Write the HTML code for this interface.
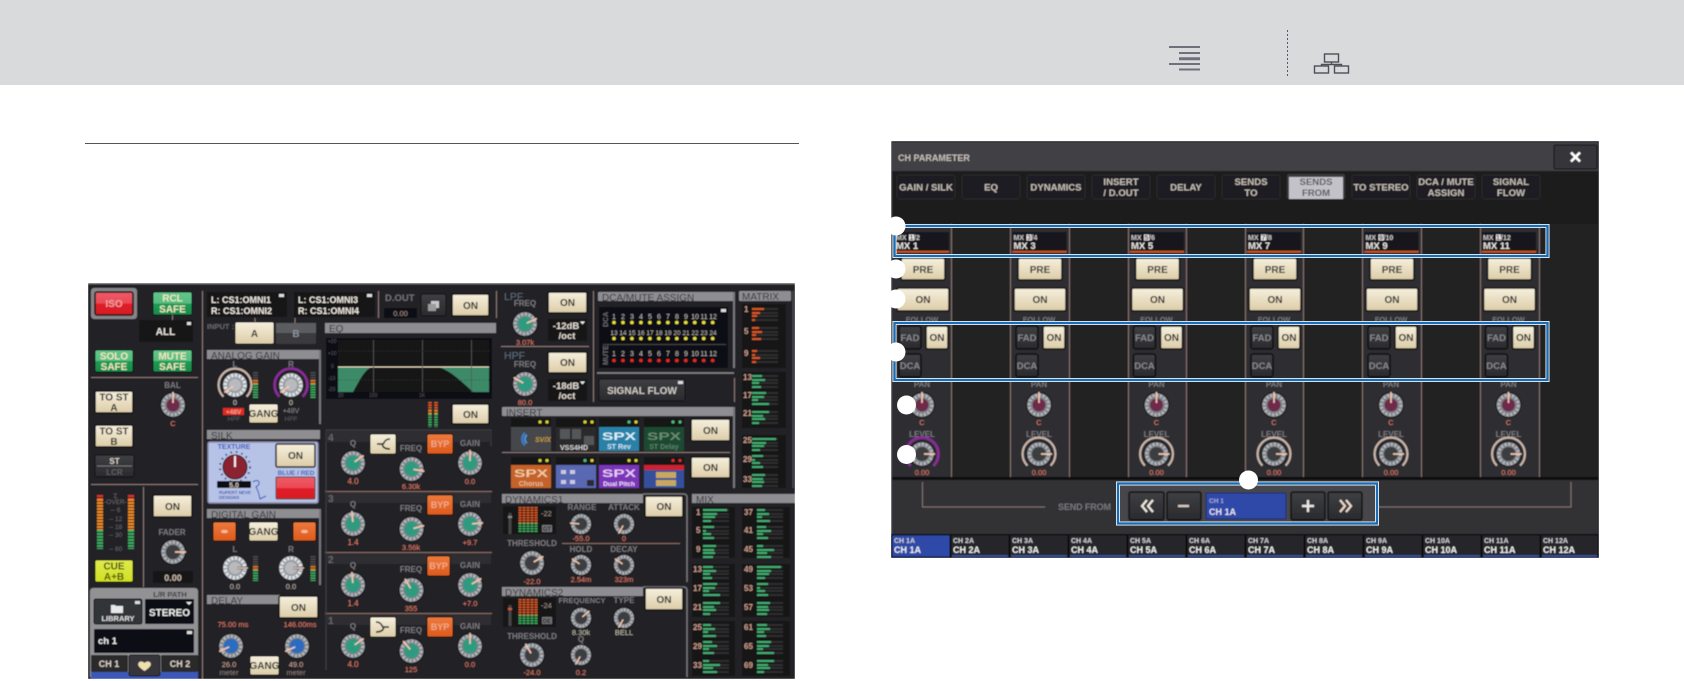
<!DOCTYPE html>
<html><head><meta charset="utf-8"><title>CH PARAMETER</title>
<style>
html,body{margin:0;padding:0;background:#fff;width:1684px;height:681px;overflow:hidden}
svg{display:block;font-family:"Liberation Sans",sans-serif}
.v{fill:#e07a68;font-size:7.5px;text-anchor:middle}
.l{fill:#77777c;font-size:8px;font-weight:bold;text-anchor:middle}
.h{fill:#333338;font-size:10px}
.b{fill:#2b2b2b;font-size:10px;font-weight:bold;text-anchor:middle}
.w{fill:#e8e4dc;font-size:10px;font-weight:bold;text-anchor:middle}
.g{fill:#f0e6c0;font-size:10px;font-weight:bold;text-anchor:middle}
.o{fill:#c2bab2;font-size:9.6px;font-weight:bold;text-anchor:middle}
.n{fill:#d8d0c8;font-size:8px;font-weight:bold;text-anchor:middle}
.s{fill:#efe8e0;font-size:9px;font-weight:bold}
.t{fill:#c8c8c8;font-size:7px;font-weight:bold}
</style></head><body>
<svg width="1684" height="681" viewBox="0 0 1684 681" xmlns="http://www.w3.org/2000/svg">
<defs>
<linearGradient id="cr" x1="0" y1="0" x2="0" y2="1"><stop offset="0" stop-color="#f6efdd"/><stop offset="1" stop-color="#dccda8"/></linearGradient>
<linearGradient id="gr" x1="0" y1="0" x2="0" y2="1"><stop offset="0" stop-color="#62c68a"/><stop offset=".5" stop-color="#56bd80"/><stop offset=".51" stop-color="#1f9c55"/><stop offset="1" stop-color="#178a4a"/></linearGradient>
<linearGradient id="re" x1="0" y1="0" x2="0" y2="1"><stop offset="0" stop-color="#ee5a68"/><stop offset=".5" stop-color="#ea4a55"/><stop offset=".51" stop-color="#e2202a"/><stop offset="1" stop-color="#d61a22"/></linearGradient>
<linearGradient id="ye" x1="0" y1="0" x2="0" y2="1"><stop offset="0" stop-color="#e0ea50"/><stop offset="1" stop-color="#d0e020"/></linearGradient>
<linearGradient id="or" x1="0" y1="0" x2="0" y2="1"><stop offset="0" stop-color="#ee7a3c"/><stop offset="1" stop-color="#dc5a1c"/></linearGradient>
<linearGradient id="dk" x1="0" y1="0" x2="0" y2="1"><stop offset="0" stop-color="#3e3f43"/><stop offset="1" stop-color="#2a2b2e"/></linearGradient>
<filter id="bl" x="0" y="0" width="100%" height="100%"><feGaussianBlur stdDeviation="0.45"/></filter>
<g id="r"><circle r="13" fill="#0c0c0c"/><circle r="12" fill="#7e8186"/><circle r="9.8" fill="none" stroke="#b2b5ba" stroke-width="3" stroke-dasharray="2.2 1.6"/></g>
<g id="kT"><use href="#r"/><circle r="7.2" fill="#2f9b80"/></g>
<g id="kM"><use href="#r"/><circle r="6.5" fill="#6e2c4c"/></g>
<g id="kD"><use href="#r"/><circle r="7" fill="#3b3c40"/></g>
<g id="kB"><use href="#r"/><circle r="7.2" fill="#2c6cc0"/></g>
<g id="kS"><circle r="13" fill="#222"/><circle r="12" fill="#9a9da2"/><circle r="9.8" fill="none" stroke="#dfe2e6" stroke-width="3.4" stroke-dasharray="2.4 1.4"/><circle r="6" fill="#b8babe"/></g>
<path id="p" d="M0-2V-13" stroke="#f4c4aa" stroke-width="1.7" fill="none"/>
<path id="arc" d="M-11.6 11.6A16.4 16.4 0 1 1 11.6 11.6" fill="none" stroke="#c9b4a8" stroke-width="2.2"/>
<g id="strip">
<rect x="-21" y="258" width="44" height="22" rx="2" fill="url(#cr)" stroke="#0e0e0e" stroke-width="1.5"/><text class="b" x="1" y="273">PRE</text>
<rect x="-25" y="288" width="52" height="23" rx="2" fill="url(#cr)" stroke="#0e0e0e" stroke-width="1.5"/><text class="b" x="1" y="303">ON</text>
<text class="l" x="0" y="322" style="font-size:7.5px">FOLLOW</text>
<rect x="-23" y="326" width="22" height="23" rx="2.5" fill="url(#dk)" stroke="#0b0b0b" stroke-width="1.5"/><text x="-12" y="341" fill="#85858a" font-size="9.5" font-weight="bold" text-anchor="middle">FAD</text>
<rect x="4" y="326" width="22" height="23" rx="2" fill="url(#cr)" stroke="#0e0e0e" stroke-width="1.5"/><text class="b" x="15" y="341">ON</text>
<rect x="-23" y="354" width="22" height="23" rx="2.5" fill="url(#dk)" stroke="#0b0b0b" stroke-width="1.5"/><text x="-12" y="369" fill="#85858a" font-size="9.5" font-weight="bold" text-anchor="middle">DCA</text>
<text class="l" x="0" y="387">PAN</text>
<g transform="translate(0 405)"><use href="#kM"/><use href="#p"/></g>
<text class="v" x="0" y="425">C</text>
<text class="l" x="0" y="437">LEVEL</text>
<g transform="translate(0 454)"><use href="#arc"/><use href="#kD"/><path d="M2 0H13" stroke="#f4c4aa" stroke-width="1.7"/></g>
<text class="v" x="0" y="475">0.00</text>
</g>
<g id="bars1"><path d="M0 3h26M0 7h26M0 10h26M0 14h26M0 20h26M0 24h26M0 27h26M0 31h26M0 39h26M0 43h26M0 46h26M0 50h26" stroke="#2e2e30" stroke-width="2"/><path d="M0 3h24M0 7h14M0 10h12M0 14h8M0 20h11M0 24h3M0 27h8M0 31h11M0 39h13M0 43h11M0 46h12M0 50h10" stroke="#42ac70" stroke-width="2"/></g>
<g id="bars2"><path d="M0 3h26M0 7h26M0 10h26M0 14h26M0 20h26M0 24h26M0 27h26M0 31h26M0 39h26M0 43h26M0 46h26M0 50h26" stroke="#2e2e30" stroke-width="2"/><path d="M0 3h10M0 7h13M0 10h7M0 14h9M0 20h14M0 24h12M0 27h6M0 31h17M0 39h17M0 43h11M0 46h13M0 50h7" stroke="#42ac70" stroke-width="2"/></g>
<g id="bars3"><path d="M0 3h26M0 7h26M0 10h26M0 14h26M0 20h26M0 24h26M0 27h26M0 31h26M0 39h26M0 43h26M0 46h26M0 50h26" stroke="#2e2e30" stroke-width="2"/><path d="M0 3h8M0 7h12M0 10h5M0 14h13M0 20h9M0 24h14M0 27h6M0 31h11M0 39h6M0 43h17M0 46h10M0 50h14" stroke="#42ac70" stroke-width="2"/></g>
</defs>

<!-- page header -->
<rect width="1684" height="85" fill="#d9dadc"/>
<path d="M1169 47h31M1179 53h21M1169 64h31M1179 69.500h21" stroke="#70707c" stroke-width="2" fill="none"/>
<path d="M1179 58.700h21" stroke="#70707c" stroke-width="3"/>
<path d="M1287.500 30V76" stroke="#5a5a62" stroke-width="1" stroke-dasharray="2 2"/>
<g fill="none" stroke="#4e4e5a" stroke-width="1.400"><rect x="1324.500" y="54" width="14" height="8"/><rect x="1314.500" y="66" width="14" height="7"/><rect x="1334.500" y="66" width="14" height="7"/><path d="M1331.500 62v2.500M1321.500 66v-1.500H1341.500V66"/></g>
<rect x="85" y="143" width="714" height="1" fill="#55555a"/>

<!-- LEFT SCREENSHOT -->
<g filter="url(#bl)">
<rect x="88" y="283" width="707" height="396" fill="#232325"/>
<rect x="88" y="283" width="707" height="1.500" fill="#666"/>
<g fill="none" stroke="#8a7772" stroke-width="1">
<path d="M91 377.500H198M91 484.500H198M202.500 291V679M143.500 487V587M378.500 291V318M496.500 291V318M593.500 291V402M501 346.500H589M734.500 378V402M502 452.500H730"/>
</g>
<rect x="91" y="288" width="46" height="31" rx="3" fill="#85858a"/>
<rect x="95" y="292" width="38" height="23" rx="2" fill="url(#re)" stroke="#111" stroke-width="1.500"/><text class="g" x="114" y="307" style="fill:#e8a0a0">ISO</text>
<rect x="153" y="292" width="39" height="23" rx="1.500" fill="url(#gr)" stroke="#111"/><text class="g" x="172.500" y="301.500">RCL</text><text class="g" x="172.500" y="312.500">SAFE</text>
<path d="M172.500 315v5" stroke="#8a7772"/>
<rect x="139" y="320" width="54" height="22" fill="#141416"/><text class="w" x="165.500" y="335" font-size="10">ALL</text><rect x="187" y="322" width="4" height="3" fill="#ddd"/>
<rect x="95" y="350" width="38" height="22" rx="1.500" fill="url(#gr)" stroke="#111"/><text class="g" x="114" y="359.500">SOLO</text><text class="g" x="114" y="370">SAFE</text>
<rect x="153" y="350" width="39" height="22" rx="1.500" fill="url(#gr)" stroke="#111"/><text class="g" x="172.500" y="359.500">MUTE</text><text class="g" x="172.500" y="370">SAFE</text>
<rect x="95" y="391" width="38" height="22" rx="1.500" fill="url(#cr)" stroke="#111" stroke-width="1.500"/><text class="b" x="114" y="400.500">TO ST</text><text class="b" x="114" y="411">A</text>
<rect x="95" y="425" width="38" height="22" rx="1.500" fill="url(#cr)" stroke="#111" stroke-width="1.500"/><text class="b" x="114" y="434.500">TO ST</text><text class="b" x="114" y="445">B</text>
<rect x="95" y="455" width="39" height="22" rx="2" fill="url(#dk)" stroke="#111"/><path d="M97 466h35" stroke="#777"/><text class="n" x="114.500" y="464">ST</text><text x="114.500" y="475" fill="#5e5e62" font-size="8" font-weight="bold" text-anchor="middle">LCR</text>
<text class="l" x="172.500" y="388">BAL</text>
<g transform="translate(173 405)"><use href="#kM"/><use href="#p"/></g><text class="v" x="173" y="426">C</text>
<g fill="none" stroke-width="6" stroke-dasharray="2 1"><path d="M100 495v4M131 495v4" stroke="#d8322a"/><path d="M100 499v31M131 499v31" stroke="#ee8a22"/><path d="M100 530v19M131 530v19" stroke="#3ea85e"/></g>
<g fill="#66666a" font-size="6.500" text-anchor="middle"><text x="115.500" y="498">Σ</text><text x="115.500" y="504">-OVER-</text><text x="115.500" y="512">-- 6</text><text x="115.500" y="521">-- 12</text><text x="115.500" y="529">-- 18</text><text x="115.500" y="537">-- 30</text><text x="115.500" y="551">-- 60</text></g>
<rect x="153" y="495" width="39" height="22" rx="1.500" fill="url(#cr)" stroke="#111" stroke-width="1.500"/><text class="b" x="172.500" y="510">ON</text>
<text class="l" x="172" y="535">FADER</text>
<g transform="translate(173 552)"><use href="#kD"/><path d="M2 0H13" stroke="#f4c4aa" stroke-width="1.700"/></g>
<rect x="153" y="571" width="40" height="12" rx="1.500" fill="#141416"/><text x="173" y="581" fill="#cbb8a8" font-size="9" font-weight="bold" text-anchor="middle">0.00</text>
<rect x="95" y="560" width="38" height="22" rx="1.500" fill="url(#ye)" stroke="#111"/><text class="b" x="114" y="569.500" style="fill:#4a5018">CUE</text><text class="b" x="114" y="580" style="fill:#4a5018">A+B</text>
<!-- bottom left panel -->
<rect x="90" y="588" width="108" height="91" rx="3" fill="#929294"/>
<text x="170" y="597" fill="#3a3a3c" font-size="7.500" font-weight="bold" text-anchor="middle">L/R PATH</text>
<rect x="94" y="599" width="48" height="25" rx="2" fill="#333437" stroke="#111"/><path d="M111 605h4l1 1h7v7h-12z" fill="#e8e8e8"/><text x="118" y="621" fill="#dcdcdc" font-size="7.500" font-weight="bold" text-anchor="middle">LIBRARY</text><rect x="135" y="601" width="5" height="3" fill="#ddd"/>
<rect x="145" y="599" width="49" height="25" rx="1" fill="#111114"/><text x="169.500" y="616" fill="#eee" font-size="10" font-weight="bold" text-anchor="middle">STEREO</text><path d="M186 602h6l-3 3z" fill="#eee"/>
<rect x="94" y="629" width="100" height="24" rx="1" fill="#111114"/><text x="98" y="644" fill="#eee" font-size="9.500" font-weight="bold">ch 1</text><rect x="187" y="631" width="5" height="3" fill="#ddd"/>
<rect x="91" y="655" width="37" height="17" rx="1" fill="#2a2a2c"/><text class="n" x="109" y="667" style="font-size:9px">CH 1</text>
<rect x="161" y="655" width="37" height="17" rx="1" fill="#2a2a2c"/><text class="n" x="180" y="667" style="font-size:9px">CH 2</text>
<rect x="91" y="672" width="107" height="7" fill="#3c58b8"/>
<rect x="129" y="655" width="31" height="21" rx="2" fill="#35363a" stroke="#111"/><path d="M144.500 671c-6-4-7-6-6-8 1-2 4-2 6 0 2-2 5-2 6 0 1 2 0 4-6 8z" fill="#f0e0b0"/>
<!-- inputs -->
<rect x="207" y="292" width="80" height="25" fill="#141416"/><text class="s" x="211" y="303">L: CS1:OMNI1</text><text class="s" x="211" y="314">R: CS1:OMNI2</text><rect x="279" y="294" width="5" height="3" fill="#ddd"/>
<rect x="294" y="292" width="81" height="25" fill="#141416"/><text class="s" x="298" y="303">L: CS1:OMNI3</text><text class="s" x="298" y="314">R: CS1:OMNI4</text><rect x="367" y="294" width="5" height="3" fill="#ddd"/>
<text x="207" y="329" fill="#66666a" font-size="7.500" font-weight="bold">INPUT :</text>
<rect x="235" y="322" width="39" height="22" rx="1.500" fill="url(#cr)" stroke="#111"/><text class="b" x="254.500" y="337">A</text>
<rect x="276" y="323" width="40" height="21" rx="1.500" fill="#3a3b3e"/><rect x="276" y="323" width="40" height="10" fill="#5c5d60"/><text x="296" y="337" fill="#8a9098" font-size="10" font-weight="bold" text-anchor="middle">B</text>
<path d="M255 318v4M295 318v5" stroke="#8a7772"/>
<text x="385" y="301" fill="#707075" font-size="9.500" font-weight="bold">D.OUT</text>
<rect x="384" y="308" width="33" height="10" rx="1" fill="#111114"/><text class="v" x="400.500" y="316" style="fill:#a08a80">0.00</text>
<rect x="421" y="294" width="25" height="22" rx="2" fill="url(#dk)" stroke="#111"/><rect x="431" y="301" width="8" height="7" fill="#c8c8c8"/><rect x="428" y="304" width="8" height="7" fill="#9a9a9a"/>
<rect x="452" y="294" width="37" height="22" rx="1.500" fill="url(#cr)" stroke="#111" stroke-width="1.500"/><text class="b" x="470.500" y="309">ON</text>
<!-- analog gain -->
<rect x="207" y="350" width="113" height="9" fill="#8e8e92"/><text class="h" x="211" y="359">ANALOG GAIN</text>
<path d="M320 350v74" stroke="#77777c" stroke-width="2"/>
<text class="l" x="235" y="367">L</text><text class="l" x="291" y="367">R</text>
<g transform="translate(235 385)"><use href="#arc"/><use href="#kS"/><use href="#p" transform="rotate(-125)"/></g>
<g transform="translate(291 385)"><path d="M-11.600 11.600A16.400 16.400 0 1 1 11.600 11.600" fill="none" stroke="#8a2a9a" stroke-width="2.600"/><use href="#kS"/><use href="#p" transform="rotate(-125)"/></g>
<g fill="none" stroke-width="5" stroke-dasharray="1.500 1"><path d="M255.500 372v8M313 372v8" stroke="#4a4a4a"/><path d="M255.500 380v4M313 380v4" stroke="#d87a28"/><path d="M255.500 384v14M313 384v14" stroke="#3ea85e"/></g>
<text class="v" x="235" y="405" style="fill:#c8c0b8">0</text><text class="v" x="291" y="405" style="fill:#c8c0b8">0</text>
<rect x="223" y="408" width="21" height="7" fill="#e22a20"/><text x="233.500" y="414" fill="#eea090" font-size="6.500" font-weight="bold" text-anchor="middle">+48V</text>
<text x="291" y="413" fill="#85858a" font-size="7" text-anchor="middle">+48V</text>
<text x="234" y="421" fill="#56565a" font-size="6.500" text-anchor="middle">HPF</text><text x="291" y="421" fill="#56565a" font-size="6.500" text-anchor="middle">HPF</text>
<rect x="249" y="404" width="29" height="19" rx="1.500" fill="url(#cr)" stroke="#111"/><text class="b" x="263.500" y="417">GANG</text>
<!-- silk -->
<rect x="207" y="430" width="113" height="9" fill="#8e8e92"/><text class="h" x="211" y="439">SILK</text>
<rect x="208" y="442" width="110" height="61" rx="2" fill="#b6c2e6" stroke="#8a88a8" stroke-width="1.500"/>
<text x="234" y="449" fill="#3c5cc0" font-size="7" font-weight="bold" text-anchor="middle">TEXTURE</text>
<circle cx="235" cy="467" r="15" fill="none" stroke="#3a4a88" stroke-width="2" stroke-dasharray="1.500 4"/>
<circle cx="235" cy="467" r="12" fill="#8a2030" stroke="#3a1a24"/><path d="M235 467v-11" stroke="#eee" stroke-width="2"/>
<rect x="217" y="481" width="34" height="7" rx="1" fill="#101012"/><text x="234" y="487.500" fill="#d8c8b8" font-size="7" font-weight="bold" text-anchor="middle">5.0</text>
<text x="219" y="494" fill="#4a5cb0" font-size="4.500" font-weight="bold">RUPERT NEVE</text><text x="219" y="499" fill="#4a5cb0" font-size="4.500" font-weight="bold">DESIGNS</text>
<path d="M253 482c2-2 5-2 6 0 1 3-2 4-3 5 2 3 3 7 4 12l6-3" fill="none" stroke="#3a55b8" stroke-width="1"/>
<rect x="276" y="444" width="39" height="23" rx="1.500" fill="url(#cr)" stroke="#222" stroke-width="1.500"/><text class="b" x="295.500" y="459">ON</text>
<text x="296" y="475" fill="#3c5cc0" font-size="6.500" font-weight="bold" text-anchor="middle">BLUE / RED</text>
<rect x="276" y="477" width="39" height="22" rx="1.500" fill="url(#re)" stroke="#444"/>
<!-- digital gain -->
<rect x="207" y="509" width="113" height="9" fill="#8e8e92"/><text class="h" x="211" y="518">DIGITAL GAIN</text>
<path d="M320 509v76" stroke="#77777c" stroke-width="2"/>
<rect x="213" y="522" width="23" height="19" rx="1.500" fill="url(#or)" stroke="#111"/><ellipse cx="224.500" cy="531.500" rx="3.500" ry="1.800" fill="#f8b89a"/>
<rect x="293" y="522" width="23" height="19" rx="1.500" fill="url(#or)" stroke="#111"/><ellipse cx="304.500" cy="531.500" rx="3.500" ry="1.800" fill="#f8b89a"/>
<rect x="249" y="522" width="29" height="19" rx="1.500" fill="url(#cr)" stroke="#111"/><text class="b" x="263.500" y="535">GANG</text>
<text class="l" x="235" y="552">L</text><text class="l" x="291" y="552">R</text>
<g transform="translate(235 568)"><use href="#kS"/><path d="M2 0H13" stroke="#222" stroke-width="2.200"/><path d="M2 0H13" stroke="#f4d4c4" stroke-width="1"/></g>
<g transform="translate(291 568)"><use href="#kS"/><path d="M2 0H13" stroke="#222" stroke-width="2.200"/><path d="M2 0H13" stroke="#f4d4c4" stroke-width="1"/></g>
<g fill="none" stroke-width="5" stroke-dasharray="1.500 1"><path d="M255.500 556v10M313 556v10" stroke="#4a4a4a"/><path d="M255.500 566v4M313 566v4" stroke="#d87a28"/><path d="M255.500 570v11M313 570v11" stroke="#3ea85e"/></g>
<text class="v" x="235" y="589" style="fill:#bbb0a8">0.0</text><text class="v" x="291" y="589" style="fill:#bbb0a8">0.0</text>
<!-- delay -->
<rect x="207" y="595" width="73" height="9" fill="#8e8e92"/><text class="h" x="211" y="604">DELAY</text>
<rect x="279" y="596" width="39" height="22" rx="1.500" fill="url(#cr)" stroke="#111" stroke-width="1.500"/><text class="b" x="298.500" y="611">ON</text>
<text class="v" x="233" y="627">75.00 ms</text><text class="v" x="300" y="627">146.00ms</text>
<g transform="translate(231 646)"><use href="#kB"/><use href="#p" transform="rotate(-115)"/></g>
<g transform="translate(297 646)"><use href="#kB"/><use href="#p" transform="rotate(-115)"/></g>
<text class="v" x="229" y="667" style="fill:#c8a090">26.0</text><text class="v" x="229" y="675" style="fill:#8a7a74">meter</text>
<text class="v" x="296" y="667" style="fill:#c8a090">49.0</text><text class="v" x="296" y="675" style="fill:#8a7a74">meter</text>
<rect x="250" y="656" width="29" height="19" rx="1.500" fill="url(#cr)" stroke="#111"/><text class="b" x="264.500" y="669">GANG</text>
<!-- EQ -->
<rect x="325" y="323" width="171" height="10" fill="#8e8e92"/><text class="h" x="329" y="332">EQ</text>
<rect x="326" y="338" width="166" height="61" fill="#101012"/>
<rect x="338" y="340" width="151" height="52" fill="#171719"/>
<path d="M338 367H372C364 370 360 380 353 392H338ZM438 367C450 370 462 382 473 392H489V367Z" fill="#3e8a68"/>
<path d="M338 367H489" stroke="#eadcbc" stroke-width="1"/>
<path d="M373.500 340V392M422.500 340V392M471.500 340V392" stroke="#55555a" stroke-width=".8"/>
<path d="M338 351H489M338 380H489" stroke="#3a3a3e" stroke-width=".7" stroke-dasharray="1 2"/>
<g fill="#55555a" font-size="5"><text x="328" y="343">+20</text><text x="328" y="355">+10</text><text x="331" y="368">0</text><text x="328" y="380">-10</text><text x="328" y="391">-20</text><text x="338" y="397">20</text><text x="369" y="397">100</text><text x="419" y="397">1K</text></g>
<g fill="none" stroke-width="3.500" stroke-dasharray="1.500 1"><path d="M430 402v8M436 402v8" stroke="#d85a28"/><path d="M430 410v4M436 410v4" stroke="#e08a2c"/><path d="M430 414v13M436 414v13" stroke="#3ea85e"/></g>
<rect x="452" y="404" width="37" height="20" rx="1.500" fill="url(#cr)" stroke="#111" stroke-width="1.500"/><text class="b" x="470.500" y="418">ON</text>
<!-- bands -->
<path d="M325 491.500H492M325 552.500H492M325 613.500H492" stroke="#8a6a62"/>
<path d="M326 430h165v16M326 430v240" fill="none" stroke="#3c3c40"/>
<g fill="#2d2d30"><rect x="326" y="431" width="165" height="11"/><rect x="326" y="492" width="165" height="11"/><rect x="326" y="553" width="165" height="11"/><rect x="326" y="614" width="165" height="11"/></g>
<g fill="#66666a" font-size="10" font-weight="bold"><text x="328" y="441">4</text><text x="328" y="502">3</text><text x="328" y="563">2</text><text x="328" y="624">1</text></g>
<text class="l" x="353" y="446">Q</text><g transform="translate(353 463)"><use href="#kT"/><use href="#p" transform="rotate(55)"/></g><text class="v" x="353" y="484" style="font-size:8px">4.0</text>
<text class="l" x="411" y="451">FREQ</text><g transform="translate(411.500 469)"><use href="#kT"/><use href="#p" transform="rotate(100)"/></g><text class="v" x="411" y="489">6.30k</text>
<text class="l" x="470" y="446">GAIN</text><g transform="translate(470 463)"><use href="#kT"/><use href="#p"/></g><text class="v" x="470" y="484">0.0</text>
<text class="l" x="353" y="507">Q</text><g transform="translate(353 524)"><use href="#kT"/><use href="#p" transform="rotate(-5)"/></g><text class="v" x="353" y="545" style="font-size:8px">1.4</text>
<text class="l" x="411" y="511">FREQ</text><g transform="translate(411.500 529)"><use href="#kT"/><use href="#p" transform="rotate(75)"/></g><text class="v" x="411" y="550">3.56k</text>
<text class="l" x="470" y="507">GAIN</text><g transform="translate(470 524)"><use href="#kT"/><use href="#p" transform="rotate(85)"/></g><text class="v" x="470" y="545">+9.7</text>
<text class="l" x="353" y="568">Q</text><g transform="translate(353 585)"><use href="#kT"/><use href="#p" transform="rotate(-5)"/></g><text class="v" x="353" y="606" style="font-size:8px">1.4</text>
<text class="l" x="411" y="572">FREQ</text><g transform="translate(411.500 590)"><use href="#kT"/><use href="#p" transform="rotate(-30)"/></g><text class="v" x="411" y="611">355</text>
<text class="l" x="470" y="568">GAIN</text><g transform="translate(470 585)"><use href="#kT"/><use href="#p" transform="rotate(60)"/></g><text class="v" x="470" y="606">+7.0</text>
<text class="l" x="353" y="629">Q</text><g transform="translate(353 646)"><use href="#kT"/><use href="#p" transform="rotate(55)"/></g><text class="v" x="353" y="667" style="font-size:8px">4.0</text>
<text class="l" x="411" y="633">FREQ</text><g transform="translate(411.500 651)"><use href="#kT"/><use href="#p" transform="rotate(-40)"/></g><text class="v" x="411" y="672">125</text>
<text class="l" x="470" y="629">GAIN</text><g transform="translate(470 646)"><use href="#kT"/><use href="#p"/></g><text class="v" x="470" y="667">0.0</text>
<g fill="url(#or)" stroke="#111"><rect x="427" y="434" width="26" height="20" rx="1.500"/><rect x="427" y="495" width="26" height="20" rx="1.500"/><rect x="427" y="556" width="23" height="20" rx="1.500"/><rect x="427" y="617" width="26" height="20" rx="1.500"/></g>
<g fill="#f0a888" font-size="9" font-weight="bold" text-anchor="middle"><text x="440" y="447">BYP</text><text x="440" y="508">BYP</text><text x="438.500" y="569">BYP</text><text x="440" y="630">BYP</text></g>
<rect x="370" y="434" width="26" height="20" rx="1.500" fill="url(#cr)" stroke="#111"/><path d="M377 444h6M390 439c-6 0-6 5-7 5s-1 5 7 5" fill="none" stroke="#222" stroke-width="1.600"/>
<rect x="370" y="617" width="26" height="20" rx="1.500" fill="url(#cr)" stroke="#111"/><path d="M389 627h-6M376 622c6 0 6 5 7 5s1 5-7 5" fill="none" stroke="#222" stroke-width="1.600"/>
<!-- LPF / HPF -->
<text x="504" y="300" fill="#5c6a78" font-size="10.500">LPF</text><text class="l" x="525" y="306">FREQ</text>
<rect x="548" y="292" width="39" height="21" rx="1.500" fill="url(#cr)" stroke="#111" stroke-width="1.500"/><text class="b" x="567.500" y="306">ON</text>
<g transform="translate(525 324)"><use href="#kT"/><use href="#p" transform="rotate(65)"/></g><text class="v" x="525" y="345">3.07k</text>
<rect x="548" y="319" width="39" height="22" fill="#131315"/><text x="566" y="329" fill="#e0d8d0" font-size="9.500" font-weight="bold" text-anchor="middle">-12dB</text><path d="M580 321.500h5l-2.500 3z" fill="#eee"/><text x="567" y="339" fill="#e0d8d0" font-size="9.500" font-weight="bold" text-anchor="middle">/oct</text>
<text x="504" y="359" fill="#5c6a78" font-size="10.500">HPF</text><text class="l" x="525" y="367">FREQ</text>
<rect x="548" y="352" width="39" height="21" rx="1.500" fill="url(#cr)" stroke="#111" stroke-width="1.500"/><text class="b" x="567.500" y="366">ON</text>
<g transform="translate(525 384)"><use href="#kT"/><use href="#p" transform="rotate(-60)"/></g><text class="v" x="525" y="405">80.0</text>
<rect x="548" y="379" width="39" height="22" fill="#131315"/><text x="566" y="389" fill="#e0d8d0" font-size="9.500" font-weight="bold" text-anchor="middle">-18dB</text><path d="M580 381.500h5l-2.500 3z" fill="#eee"/><text x="567" y="399" fill="#e0d8d0" font-size="9.500" font-weight="bold" text-anchor="middle">/oct</text>
<!-- DCA -->
<rect x="598" y="292" width="136" height="9" rx="1" fill="#8e8e92"/><text class="h" x="602" y="301">DCA/MUTE ASSIGN</text>
<path d="M734 292v76" stroke="#77777c" stroke-width="2"/>
<rect x="599" y="307" width="129" height="61" fill="#101012"/><rect x="721" y="309" width="5" height="3" fill="#ddd"/>
<g fill="#b8b4b0" font-size="7" text-anchor="middle"><text y="319"><tspan x="614">1</tspan><tspan x="623">2</tspan><tspan x="632">3</tspan><tspan x="641">4</tspan><tspan x="650">5</tspan><tspan x="659">6</tspan><tspan x="668">7</tspan><tspan x="677">8</tspan><tspan x="686">9</tspan><tspan x="695">10</tspan><tspan x="704">11</tspan><tspan x="713">12</tspan></text>
<text y="335" font-size="6.500"><tspan x="614">13</tspan><tspan x="623">14</tspan><tspan x="632">15</tspan><tspan x="641">16</tspan><tspan x="650">17</tspan><tspan x="659">18</tspan><tspan x="668">19</tspan><tspan x="677">20</tspan><tspan x="686">21</tspan><tspan x="695">22</tspan><tspan x="704">23</tspan><tspan x="713">24</tspan></text>
<text y="356"><tspan x="614">1</tspan><tspan x="623">2</tspan><tspan x="632">3</tspan><tspan x="641">4</tspan><tspan x="650">5</tspan><tspan x="659">6</tspan><tspan x="668">7</tspan><tspan x="677">8</tspan><tspan x="686">9</tspan><tspan x="695">10</tspan><tspan x="704">11</tspan><tspan x="713">12</tspan></text></g>
<g fill="none" stroke-linecap="round" stroke-width="3.600" stroke-dasharray="0 8.970"><path d="M614 322.500H716M614 338.500H716" stroke="#e8e040"/><path d="M614 360.500H716" stroke="#e8281e"/></g>
<path d="M603 344.500H726" stroke="#444"/>
<text transform="translate(608 327) rotate(-90)" fill="#66666a" font-size="7" font-weight="bold">DCA</text><text transform="translate(608 365) rotate(-90)" fill="#66666a" font-size="7" font-weight="bold">MUTE</text>
<path d="M597 373H734" stroke="#8a8a8a" stroke-width="1.500"/>
<rect x="599" y="379" width="86" height="22" rx="2" fill="url(#dk)" stroke="#111"/><text x="642" y="394" fill="#ccc6c0" font-size="10" font-weight="bold" text-anchor="middle">SIGNAL FLOW</text><rect x="678" y="381" width="5" height="3" fill="#ddd"/>
<!-- INSERT -->
<rect x="502" y="407" width="232" height="9" rx="1" fill="#8e8e92"/><text class="h" x="506" y="416">INSERT</text>
<path d="M734 407v81" stroke="#77777c" stroke-width="2"/>
<g fill="#131315"><rect x="511" y="418" width="40" height="33"/><rect x="556" y="418" width="40" height="33"/><rect x="599" y="418" width="40" height="33"/><rect x="644" y="418" width="40" height="33"/><rect x="511" y="457" width="40" height="31"/><rect x="556" y="457" width="40" height="31"/><rect x="599" y="457" width="40" height="31"/><rect x="644" y="457" width="40" height="31"/></g>
<rect x="511" y="427" width="40" height="24" fill="#44474c"/><path d="M525 433a8 8 0 0 0 0 12" fill="none" stroke="#3a7ac8" stroke-width="2.500"/><path d="M527 435a5 5 0 0 0 0 8" fill="none" stroke="#50a0e0" stroke-width="1.500"/><text x="535" y="442" fill="#c89a3a" font-size="7" font-weight="bold" font-style="italic">SV/X</text>
<rect x="556" y="427" width="40" height="24" fill="#2a2a2c"/><rect x="560" y="429" width="10" height="10" fill="#55565a"/><rect x="572" y="429" width="9" height="10" fill="#55565a"/><rect x="584" y="436" width="10" height="9" fill="#55565a"/><text x="574" y="450" fill="#cfcfcf" font-size="7" font-weight="bold" text-anchor="middle">VSS4HD</text>
<rect x="599" y="427" width="40" height="24" fill="#2b81a8"/><text x="602" y="440" fill="#d8f0f8" font-size="11" font-weight="bold" textLength="34" lengthAdjust="spacingAndGlyphs">SPX</text><text x="619" y="449" fill="#c8e4f0" font-size="7" font-weight="bold" text-anchor="middle">ST Rev</text>
<rect x="644" y="427" width="40" height="24" fill="#1e4a30"/><text x="647" y="440" fill="#6a8a70" font-size="11" font-weight="bold" textLength="34" lengthAdjust="spacingAndGlyphs">SPX</text><text x="664" y="449" fill="#5a8068" font-size="7" font-weight="bold" text-anchor="middle">ST Delay</text>
<rect x="511" y="465" width="40" height="23" fill="#c4622c"/><text x="514" y="477" fill="#f0c8a0" font-size="11" font-weight="bold" textLength="34" lengthAdjust="spacingAndGlyphs">SPX</text><text x="531" y="486" fill="#e8b890" font-size="7" font-weight="bold" text-anchor="middle">Chorus</text>
<rect x="556" y="465" width="40" height="23" fill="#5a68b4"/><g fill="#c8c8e0"><rect x="561" y="470" width="5" height="4"/><rect x="570" y="470" width="5" height="4"/><rect x="561" y="480" width="5" height="4"/><rect x="570" y="480" width="5" height="4"/></g><rect x="587" y="480" width="7" height="6" fill="#2a2a30"/>
<rect x="599" y="465" width="40" height="23" fill="#7a36b8"/><text x="602" y="477" fill="#e8c8f4" font-size="11" font-weight="bold" textLength="34" lengthAdjust="spacingAndGlyphs">SPX</text><text x="619" y="486" fill="#f0d8f8" font-size="6.500" font-weight="bold" text-anchor="middle">Dual Pitch</text>
<rect x="644" y="465" width="40" height="23" fill="#36509a"/><rect x="644" y="465" width="40" height="5" fill="#cc2230"/><rect x="656" y="472" width="20" height="6" fill="#c8a860"/><rect x="656" y="480" width="20" height="6" fill="#c8a860"/>
<g stroke-linecap="round" stroke-width="3.200"><path d="M540 422h.01M547 422h.01M585 422h.01M592 422h.01M636 422h.01" stroke="#d8d030"/><path d="M629 422h.01M673 422h.01M680 422h.01" stroke="#50b878"/><path d="M540 460.500h.01M547 460.500h.01M592 460.500h.01M629 460.500h.01M636 460.500h.01" stroke="#d8d030"/><path d="M585 460.500h.01" stroke="#50b878"/><path d="M673 460.500h.01M680 460.500h.01" stroke="#e02a22"/></g>
<rect x="691" y="419" width="39" height="22" rx="1.500" fill="url(#cr)" stroke="#111" stroke-width="1.500"/><text class="b" x="710.500" y="434">ON</text>
<rect x="691" y="457" width="39" height="21" rx="1.500" fill="url(#cr)" stroke="#111" stroke-width="1.500"/><text class="b" x="710.500" y="471">ON</text>
<!-- DYNAMICS -->
<rect x="502" y="494" width="141" height="9" fill="#8e8e92"/><text class="h" x="505" y="503">DYNAMICS1</text>
<path d="M643 494h41a3 3 0 0 1 3 3v85" fill="none" stroke="#77777c" stroke-width="1.500"/>
<rect x="645" y="496" width="38" height="21" rx="1.500" fill="url(#cr)" stroke="#111" stroke-width="1.500"/><text class="b" x="664" y="510">ON</text>
<rect x="503" y="506" width="53" height="28" rx="1" fill="#131315"/>
<path d="M510 513v21" stroke="#444" stroke-width="3"/><rect x="508" y="516" width="4" height="2" fill="#888"/>
<g fill="none" stroke-width="3" stroke-dasharray="1.500 1"><path d="M520 507v16M524 507v16M528 507v16M532 507v16M536 507v16" stroke="#d85a28"/><path d="M520 523v10M524 523v10M528 523v10M532 523v10M536 523v10" stroke="#3ea85e"/></g>
<text x="541" y="516" fill="#a09088" font-size="7.500">-22</text><rect x="542" y="525" width="10" height="7" fill="#76767a"/><text x="547" y="531" fill="#222" font-size="6" font-weight="bold" text-anchor="middle">GT</text>
<text class="l" x="582" y="510">RANGE</text><g transform="translate(581 524) scale(.85)"><use href="#kD"/><use href="#p" transform="rotate(-85)"/></g><text class="v" x="581" y="541">-55.0</text>
<text class="l" x="624" y="510">ATTACK</text><g transform="translate(624 524) scale(.85)"><use href="#kD"/><use href="#p" transform="rotate(-150)"/></g><text class="v" x="624" y="541">0</text>
<path d="M562 543.500H680" stroke="#8a6a62"/>
<text class="l" x="581" y="552">HOLD</text><g transform="translate(581 565) scale(.85)"><use href="#kD"/><use href="#p" transform="rotate(-55)"/></g><text class="v" x="581" y="582">2.54m</text>
<text class="l" x="624" y="552">DECAY</text><g transform="translate(624 565) scale(.85)"><use href="#kD"/><use href="#p" transform="rotate(-55)"/></g><text class="v" x="624" y="582">323m</text>
<text class="l" x="532" y="546">THRESHOLD</text><g transform="translate(532 563)"><use href="#kD"/><use href="#p" transform="rotate(60)"/></g><text class="v" x="532" y="584">-22.0</text>
<rect x="502" y="587" width="141" height="9" fill="#8e8e92"/><text class="h" x="505" y="596">DYNAMICS2</text>
<path d="M643 587h41a3 3 0 0 1 3 3v87" fill="none" stroke="#77777c" stroke-width="1.500"/>
<rect x="645" y="588" width="38" height="22" rx="1.500" fill="url(#cr)" stroke="#111" stroke-width="1.500"/><text class="b" x="664" y="603">ON</text>
<rect x="503" y="598" width="53" height="29" rx="1" fill="#131315"/>
<path d="M510 605v21" stroke="#444" stroke-width="3"/><rect x="508" y="608" width="4" height="2" fill="#d8563a"/>
<g fill="none" stroke-width="3" stroke-dasharray="1.500 1"><path d="M520 599v16M524 599v16M528 599v16M532 599v16M536 599v16" stroke="#d85a28"/><path d="M520 615v10M524 615v10M528 615v10M532 615v10M536 615v10" stroke="#3ea85e"/></g>
<text x="541" y="608" fill="#a09088" font-size="7.500">-24</text><rect x="542" y="617" width="10" height="7" fill="#76767a"/><text x="547" y="623" fill="#222" font-size="6" font-weight="bold" text-anchor="middle">DE</text>
<text class="l" x="582" y="603" style="font-size:7.500px">FREQUENCY</text><g transform="translate(581 618) scale(.85)"><use href="#kD"/><use href="#p" transform="rotate(50)"/></g><text class="v" x="581" y="635" style="fill:#bba">8.30k</text>
<text class="l" x="624" y="603">TYPE</text><g transform="translate(624 618) scale(.85)"><use href="#kD"/><use href="#p" transform="rotate(-150)"/></g><text class="v" x="624" y="635" style="fill:#bba">BELL</text>
<text class="l" x="532" y="639">THRESHOLD</text><g transform="translate(532 655)"><use href="#kD"/><use href="#p" transform="rotate(-30)"/></g><text class="v" x="532" y="675">-24.0</text>
<text class="l" x="581" y="642">Q</text><g transform="translate(581 655) scale(.85)"><use href="#kD"/><use href="#p" transform="rotate(-150)"/></g><text class="v" x="581" y="675">0.2</text>
<!-- MATRIX -->
<rect x="739" y="291" width="52" height="10" rx="1" fill="#8e8e92"/><text class="h" x="742" y="300">MATRIX</text>
<path d="M793 291V488" stroke="#55555a" stroke-width="1"/>
<g fill="#131315"><rect x="742" y="304" width="44" height="64"/><rect x="742" y="372" width="44" height="56"/><rect x="742" y="435" width="44" height="53"/></g>
<g transform="translate(752 306)"><path d="M0 3h26M0 7h26M0 10h26M0 14h26M0 22h26M0 26h26M0 29h26M0 33h26M0 45h26M0 49h26M0 52h26M0 56h26" stroke="#2e2e30" stroke-width="2"/><path d="M0 3h12M0 7h8M0 10h5M0 14h3M0 22h7M0 26h10M0 29h4M0 33h9M0 45h5M0 49h3M0 52h8M0 56h4" stroke="#d8562a" stroke-width="2"/></g>
<g transform="translate(752 373)"><use href="#bars2"/></g><g transform="translate(752 436)"><use href="#bars1"/></g>
<g fill="#c89a8a" font-size="8" font-weight="bold"><text x="744" y="312">1</text><text x="744" y="334">5</text><text x="744" y="356">9</text><text x="743" y="380">13</text><text x="743" y="398">17</text><text x="743" y="416">21</text><text x="743" y="443">25</text><text x="743" y="462">29</text><text x="743" y="482">33</text></g>
<!-- MIX -->
<rect x="692" y="494" width="103" height="9" fill="#8e8e92"/><text class="h" x="696" y="503">MIX</text>
<g fill="#131315"><rect x="692" y="507" width="43" height="51"/><rect x="692" y="564" width="43" height="53"/><rect x="692" y="621" width="43" height="55"/><rect x="742" y="507" width="48" height="51"/><rect x="742" y="564" width="48" height="53"/><rect x="742" y="621" width="48" height="55"/></g>
<g transform="translate(703 507)"><use href="#bars1"/></g><g transform="translate(703 564)"><use href="#bars2"/></g><g transform="translate(703 622)"><use href="#bars3"/></g>
<g transform="translate(757 507)"><use href="#bars3"/></g><g transform="translate(757 564)"><use href="#bars1"/></g><g transform="translate(757 622)"><use href="#bars2"/></g>
<g fill="#c89a8a" font-size="8" font-weight="bold"><text x="696" y="515">1</text><text x="696" y="533">5</text><text x="696" y="552">9</text><text x="693" y="572">13</text><text x="693" y="591">17</text><text x="693" y="610">21</text><text x="693" y="630">25</text><text x="693" y="649">29</text><text x="693" y="668">33</text><text x="744" y="515">37</text><text x="744" y="533">41</text><text x="744" y="552">45</text><text x="744" y="572">49</text><text x="744" y="591">53</text><text x="744" y="610">57</text><text x="744" y="630">61</text><text x="744" y="649">65</text><text x="744" y="668">69</text></g>
</g>

<!-- RIGHT SCREENSHOT -->
<g filter="url(#bl)">
<rect x="891" y="141" width="708" height="417" fill="#2d2d30"/>
<rect x="891" y="141" width="708" height="1.500" fill="#0e0e0e"/>
<rect x="891" y="142" width="708" height="29" fill="#404145"/>
<text x="898" y="161" fill="#c4bcb6" font-size="9" font-weight="bold">CH PARAMETER</text>
<rect x="1554" y="145" width="43" height="24" rx="2" fill="#35363a" stroke="#111"/><path d="M1571 152.500l9 9M1580 152.500l-9 9" stroke="#fff" stroke-width="2.600"/>
<rect x="891" y="171" width="708" height="53" fill="#1c1c1e"/>
<g fill="#1f1f21" stroke="#2a2a2d"><rect x="897" y="175" width="58" height="24" rx="2"/><rect x="962" y="175" width="58" height="24" rx="2"/><rect x="1027" y="175" width="58" height="24" rx="2"/><rect x="1092" y="175" width="58" height="24" rx="2"/><rect x="1157" y="175" width="58" height="24" rx="2"/><rect x="1222" y="175" width="58" height="24" rx="2"/><rect x="1352" y="175" width="58" height="24" rx="2"/><rect x="1417" y="175" width="58" height="24" rx="2"/><rect x="1482" y="175" width="58" height="24" rx="2"/></g>
<rect x="1287" y="174" width="58" height="25" rx="2" fill="#3a3a3e"/><rect x="1289" y="177" width="54" height="22" fill="#c2c2c8"/>
<text class="o" x="926" y="190.500">GAIN / SILK</text><text class="o" x="991" y="190.500">EQ</text><text class="o" x="1056" y="190.500">DYNAMICS</text>
<text class="o" x="1121" y="185">INSERT</text><text class="o" x="1121" y="196">/ D.OUT</text>
<text class="o" x="1186" y="190.500">DELAY</text>
<text class="o" x="1251" y="185">SENDS</text><text class="o" x="1251" y="196">TO</text>
<text class="o" x="1316" y="185" style="fill:#5a5a62">SENDS</text><text class="o" x="1316" y="196" style="fill:#5a5a62">FROM</text>
<text class="o" x="1381" y="190.500">TO STEREO</text>
<text class="o" x="1446" y="185">DCA / MUTE</text><text class="o" x="1446" y="196">ASSIGN</text>
<text class="o" x="1511" y="185">SIGNAL</text><text class="o" x="1511" y="196">FLOW</text>
<!-- strip background -->
<g fill="#212123"><rect x="951" y="224" width="59" height="254"/><rect x="1069" y="224" width="59" height="254"/><rect x="1186" y="224" width="59" height="254"/><rect x="1303" y="224" width="59" height="254"/><rect x="1421" y="224" width="59" height="254"/><rect x="1539" y="224" width="60" height="254"/></g>
<path d="M951.500 224V478M1010.500 224V478M1069.500 224V478M1128.500 224V478M1186.500 224V478M1245.500 224V478M1303.500 224V478M1362.500 224V478M1421.500 224V478M1480.500 224V478M1539.500 224V478" stroke="#85726e" stroke-width="1"/>
<rect x="891" y="477" width="708" height="3" fill="#111"/>
<rect x="891" y="480" width="708" height="54" fill="#323236"/>
<rect x="891" y="141" width="1" height="417" fill="#55555a"/><rect x="1598" y="141" width="1" height="417" fill="#1a1a1a"/>
<!-- MX names -->
<g fill="#17171b"><rect x="895" y="232" width="54" height="21"/><rect x="1012.500" y="232" width="54" height="21"/><rect x="1130" y="232" width="54" height="21"/><rect x="1247" y="232" width="54" height="21"/><rect x="1364.500" y="232" width="54" height="21"/><rect x="1482" y="232" width="54" height="21"/></g>
<path d="M895 251.800h54M1012.500 251.800h54M1130 251.800h54M1247 251.800h54M1364.500 251.800h54M1482 251.800h54" stroke="#d4561e" stroke-width="2"/>
<g fill="#f0ece8"><rect x="909" y="234.500" width="5" height="6"/><rect x="1026.500" y="234.500" width="5" height="6"/><rect x="1144" y="234.500" width="5" height="6"/><rect x="1261" y="234.500" width="5" height="6"/><rect x="1378.500" y="234.500" width="5" height="6"/><rect x="1496" y="234.500" width="5" height="6"/></g>
<g><text class="t" x="896" y="240">MX</text><text class="t" x="909.500" y="240" style="fill:#333">1</text><text class="t" x="914" y="240">/2</text>
<text class="t" x="1013.500" y="240">MX</text><text class="t" x="1027" y="240" style="fill:#333">3</text><text class="t" x="1031.500" y="240">/4</text>
<text class="t" x="1131" y="240">MX</text><text class="t" x="1144.500" y="240" style="fill:#333">5</text><text class="t" x="1149" y="240">/6</text>
<text class="t" x="1248" y="240">MX</text><text class="t" x="1261.500" y="240" style="fill:#333">7</text><text class="t" x="1266" y="240">/8</text>
<text class="t" x="1365.500" y="240">MX</text><text class="t" x="1379" y="240" style="fill:#333">9</text><text class="t" x="1383.500" y="240">/10</text>
<text class="t" x="1483" y="240">MX</text><text class="t" x="1496" y="240" style="fill:#333">11</text><text class="t" x="1501" y="240">/12</text></g>
<g fill="#e8e4e0" font-size="9.500" font-weight="bold"><text x="896" y="249">MX 1</text><text x="1013.500" y="249">MX 3</text><text x="1131" y="249">MX 5</text><text x="1248" y="249">MX 7</text><text x="1365.500" y="249">MX 9</text><text x="1483" y="249">MX 11</text></g>
<!-- strips -->
<use href="#strip" transform="translate(922 0)"/>
<use href="#strip" transform="translate(1039 0)"/>
<use href="#strip" transform="translate(1156.500 0)"/>
<use href="#strip" transform="translate(1274 0)"/>
<use href="#strip" transform="translate(1391 0)"/>
<use href="#strip" transform="translate(1508.500 0)"/>
<path d="M910.400 465.600A16.400 16.400 0 1 1 933.600 465.600" fill="none" stroke="#8a2a9a" stroke-width="2.800"/>
<!-- footer -->
<path d="M922.500 482V507H1045M1378 507H1571V482" fill="none" stroke="#85726e" stroke-width="1"/>
<text x="1058" y="510" fill="#74747a" font-size="9" font-weight="bold" textLength="53">SEND FROM</text>
<rect x="1118" y="483" width="259" height="40" fill="#46464c"/>
<g fill="url(#dk)" stroke="#111" stroke-width="1.500"><rect x="1129" y="492" width="35" height="28" rx="2"/><rect x="1167" y="492" width="34" height="28" rx="2"/><rect x="1291" y="492" width="34" height="28" rx="2"/><rect x="1328" y="492" width="34" height="28" rx="2"/></g>
<path d="M1147 500l-5 6 5 6M1153 500l-5 6 5 6" fill="none" stroke="#ece4dc" stroke-width="2.200"/>
<path d="M1178 506h11" stroke="#d8c8c0" stroke-width="2.400"/>
<path d="M1302 506h12M1308 500v12" stroke="#ece8e4" stroke-width="2.400"/>
<path d="M1340 500l5 6-5 6M1346 500l5 6-5 6" fill="none" stroke="#e8d4c4" stroke-width="2.200"/>
<rect x="1206" y="493" width="80" height="26" fill="#2f49a8" stroke="#1c2c70"/>
<text x="1209" y="503" fill="#a8a8e0" font-size="6.500" font-weight="bold">CH  1</text>
<text x="1209" y="515" fill="#e4e0f0" font-size="9" font-weight="bold">CH 1A</text>
<!-- channel bar -->
<rect x="891" y="534" width="708" height="24" fill="#0e0e10"/>
<g fill="#26262a" stroke="#111"><rect x="951" y="535" width="58" height="22"/><rect x="1010" y="535" width="58" height="22"/><rect x="1069" y="535" width="58" height="22"/><rect x="1128" y="535" width="58" height="22"/><rect x="1187" y="535" width="58" height="22"/><rect x="1246" y="535" width="58" height="22"/><rect x="1305" y="535" width="58" height="22"/><rect x="1364" y="535" width="58" height="22"/><rect x="1423" y="535" width="58" height="22"/><rect x="1482" y="535" width="58" height="22"/><rect x="1541" y="535" width="57" height="22"/></g>
<rect x="892" y="535" width="58" height="22" fill="#2f49a8" stroke="#111"/>
<path d="M952 556h56M1011 556h56M1070 556h56M1129 556h56M1188 556h56M1247 556h56M1306 556h56M1365 556h56M1424 556h56M1483 556h56M1542 556h55" stroke="#3c58b8" stroke-width="1.600"/>
<g fill="#cfcfd4" font-size="7" font-weight="bold"><text x="894" y="543">CH 1A</text><text x="953" y="543">CH 2A</text><text x="1012" y="543">CH 3A</text><text x="1071" y="543">CH 4A</text><text x="1130" y="543">CH 5A</text><text x="1189" y="543">CH 6A</text><text x="1248" y="543">CH 7A</text><text x="1307" y="543">CH 8A</text><text x="1366" y="543">CH 9A</text><text x="1425" y="543">CH 10A</text><text x="1484" y="543">CH 11A</text><text x="1543" y="543">CH 12A</text></g>
<g fill="#eeeeee" font-size="9" font-weight="bold"><text x="894" y="553">CH 1A</text><text x="953" y="553">CH 2A</text><text x="1012" y="553">CH 3A</text><text x="1071" y="553">CH 4A</text><text x="1130" y="553">CH 5A</text><text x="1189" y="553">CH 6A</text><text x="1248" y="553">CH 7A</text><text x="1307" y="553">CH 8A</text><text x="1366" y="553">CH 9A</text><text x="1425" y="553">CH 10A</text><text x="1484" y="553">CH 11A</text><text x="1543" y="553">CH 12A</text></g>
</g>
<!-- highlight boxes -->
<g fill="none">
<g stroke="#fff" stroke-width="4"><rect x="894.500" y="226" width="653" height="30"/><rect x="894.500" y="323" width="653" height="57"/><rect x="1118" y="483.500" width="259" height="40"/></g>
<g stroke="#1a6db5" stroke-width="2.400"><rect x="894.500" y="226" width="653" height="30"/><rect x="894.500" y="323" width="653" height="57"/><rect x="1118" y="483.500" width="259" height="40"/></g>
</g>
<g fill="#fff"><circle cx="896" cy="226" r="9.500"/><circle cx="896" cy="269" r="9.500"/><circle cx="896" cy="299" r="9.500"/><circle cx="896" cy="352" r="9.500"/><circle cx="906.500" cy="405" r="9.500"/><circle cx="906.500" cy="454.500" r="9.500"/><circle cx="1248.500" cy="480" r="9.500"/></g>
</svg>
</body></html>
